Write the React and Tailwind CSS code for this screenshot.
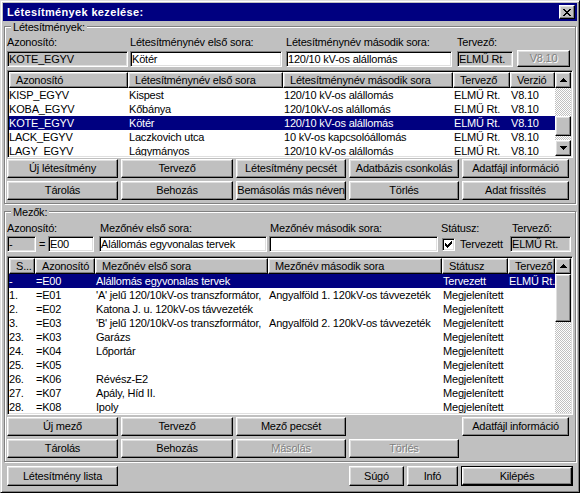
import React from 'react';

// classic 3D edges
const RAISED = "border border-t-white border-l-white border-r-black border-b-black shadow-[inset_-1px_-1px_#808080,inset_1px_1px_#dfdfdf]";
const SUNKEN = "border border-t-[#808080] border-l-[#808080] border-r-white border-b-white shadow-[inset_1px_1px_#000,inset_-1px_-1px_#dfdfdf] p-[1px]";
const ETCHED = "border border-[#808080] shadow-[inset_1px_1px_#fff,1px_1px_#fff]";
const DIS = "text-[#808080] [text-shadow:1px_1px_0_#fff]";
const DITHER = "bg-[repeating-conic-gradient(#c0c0c0_0%_25%,#ffffff_0%_50%)] bg-[length:2px_2px]";

const Pixels = ({ w, h, rects }) => (
  <svg width={w} height={h} viewBox={`0 0 ${w} ${h}`} shapeRendering="crispEdges">
    {rects.map(([x, y, rw], i) => (
      <rect key={i} x={x} y={y} width={rw} height={1} fill="#000" />
    ))}
  </svg>
);

const closeRects = [
  [0, 0, 2], [6, 0, 2], [1, 1, 2], [5, 1, 2], [2, 2, 4], [3, 3, 2],
  [2, 4, 4], [1, 5, 2], [5, 5, 2], [0, 6, 2], [6, 6, 2],
];
const upRects = [[3, 0, 1], [2, 1, 3], [1, 2, 5], [0, 3, 7]];
const downRects = [[0, 0, 7], [1, 1, 5], [2, 2, 3], [3, 3, 1]];
const checkRects = [
  [6, 0, 1], [5, 1, 2], [0, 2, 1], [4, 2, 3], [0, 3, 2], [3, 3, 3], [0, 4, 5], [1, 5, 3], [2, 6, 1],
];

const Button = ({ children, disabled, className = '' }) => (
  <div className={`${RAISED} bg-[#c0c0c0] flex items-center justify-center whitespace-nowrap ${disabled ? DIS : ''} ${className}`}>
    {children}
  </div>
);

const Field = ({ children, gray, className = '' }) => (
  <div className={`${SUNKEN} h-[16px] ${gray ? 'bg-[#c0c0c0]' : 'bg-white'} pl-[1px] leading-[12px] whitespace-nowrap overflow-hidden flex items-center ${className}`}>
    {children}
  </div>
);

const Group = ({ title, className = '', children }) => (
  <div className={`${ETCHED} mx-[1px] pl-[2px] pr-[2px] pb-[3px] flex flex-col ${className}`}>
    <div className="-mt-[6px] ml-[4px] w-fit px-[2px] h-[13px] bg-[#c0c0c0]">{title}</div>
    {children}
  </div>
);

const ScrollBtn = ({ rects }) => (
  <div className={`${RAISED} bg-[#c0c0c0] h-[16px] flex items-center justify-center`}>
    <Pixels w={7} h={4} rects={rects} />
  </div>
);

const ListView = ({ cols, rows, selected, className = '', scroll }) => (
  <div className={`${SUNKEN} flex bg-white ${className}`}>
    <div className="flex-1 flex flex-col overflow-hidden">
      <div className="flex h-[16px] shrink-0 bg-[#c0c0c0]">
        {cols.map((c, i) => (
          <div key={i} className={`${RAISED} shrink-0 pl-[6px] flex items-center whitespace-nowrap overflow-hidden`} style={{ width: c.w }}>
            {c.title}
          </div>
        ))}
      </div>
      <div className="flex-1 overflow-hidden">
        {rows.map((r, i) => (
          <div key={i} className={`flex h-[14px] items-center ${i === selected ? 'bg-[#000080] text-white' : ''}`}>
            {r.map((t, j) => (
              <div key={j} className={`shrink-0 whitespace-nowrap overflow-hidden ${j === 0 ? 'pl-0' : 'pl-[1px]'}`} style={{ width: cols[j].w }}>
                {t}
              </div>
            ))}
          </div>
        ))}
      </div>
    </div>
    <div className="w-[16px] flex flex-col shrink-0">{scroll}</div>
  </div>
);

const facilityCols = [
  { title: 'Azonosító', w: 119 },
  { title: 'Létesítménynév első sora', w: 155 },
  { title: 'Létesítménynév második sora', w: 170 },
  { title: 'Tervező', w: 57 },
  { title: 'Verzió', w: 45 },
];

const facilityRows = [
  ['KISP_EGYV', 'Kispest', '120/10 kV-os alállomás', 'ELMŰ Rt.', 'V8.10'],
  ['KOBA_EGYV', 'Kőbánya', '120/10kV-os alállomás', 'ELMŰ Rt.', 'V8.10'],
  ['KOTE_EGYV', 'Kötér', '120/10 kV-os alállomás', 'ELMŰ Rt.', 'V8.10'],
  ['LACK_EGYV', 'Laczkovich utca', '10 kV-os kapcsolóállomás', 'ELMŰ Rt.', 'V8.10'],
  ['LAGY_EGYV', 'Lágymányos', '120/10 kV-os alállomás', 'ELMŰ Rt.', 'V8.10'],
];

const fieldCols = [
  { title: 'S...', w: 26 },
  { title: 'Azonosító', w: 60 },
  { title: 'Mezőnév első sora', w: 173 },
  { title: 'Mezőnév második sora', w: 174 },
  { title: 'Státusz', w: 66 },
  { title: 'Tervező', w: 47 },
];

const fieldRows = [
  ['-', '=E00', 'Alállomás egyvonalas tervek', '', 'Tervezett', 'ELMŰ Rt.'],
  ['1.', '=E01', "'A' jelű 120/10kV-os transzformátor,", 'Angyalföld 1. 120kV-os távvezeték', 'Megjelenített', ''],
  ['2.', '=E02', 'Katona J. u. 120kV-os távvezeték', '', 'Megjelenített', ''],
  ['3.', '=E03', "'B' jelű 120/10kV-os transzformátor,", 'Angyalföld 2. 120kV-os távvezeték', 'Megjelenített', ''],
  ['23.', '=K03', 'Garázs', '', 'Megjelenített', ''],
  ['24.', '=K04', 'Lőportár', '', 'Megjelenített', ''],
  ['25.', '=K05', '', '', 'Megjelenített', ''],
  ['26.', '=K06', 'Révész-E2', '', 'Megjelenített', ''],
  ['27.', '=K07', 'Apály, Híd II.', '', 'Megjelenített', ''],
  ['28.', '=K08', 'Ipoly', '', 'Megjelenített', ''],
];

export default function App() {
  return (
    <div className="w-[580px] h-[493px] bg-[#c0c0c0] border border-t-[#dfdfdf] border-l-[#dfdfdf] border-r-black border-b-black shadow-[inset_1px_1px_#fff,inset_-1px_-1px_#808080] p-[2px] flex flex-col font-['Liberation_Sans',Arial,sans-serif] text-[11px] leading-[13px] tracking-[-0.2px] text-black select-none">
      {/* title bar */}
      <div className="h-[18px] shrink-0 bg-[#000080] flex items-center pl-[4px] pr-[2px]">
        <span className="text-white font-bold tracking-[0.35px]">Létesítmények kezelése:</span>
        <div className={`${RAISED} bg-[#c0c0c0] ml-auto w-[16px] h-[14px] flex items-center justify-center`}>
          <Pixels w={8} h={7} rects={closeRects} />
        </div>
      </div>

      {/* facilities */}
      <Group title="Létesítmények:" className="mt-[5px]">
        <div className="flex mt-[2px]">
          <div className="w-[121px] flex flex-col">
            <div className="h-[13px]">Azonosító:</div>
            <Field gray className="mt-[2px]">KOTE_EGYV</Field>
          </div>
          <div className="w-[152px] ml-[2px] flex flex-col">
            <div className="h-[13px]">Létesítménynév első sora:</div>
            <Field className="mt-[2px]">Kötér</Field>
          </div>
          <div className="w-[166px] ml-[4px] flex flex-col">
            <div className="h-[13px]">Létesítménynév második sora:</div>
            <Field className="mt-[2px]">120/10 kV-os alállomás</Field>
          </div>
          <div className="w-[56px] ml-[5px] flex flex-col">
            <div className="h-[13px]">Tervező:</div>
            <Field gray className="mt-[2px]">ELMŰ Rt.</Field>
          </div>
          <div className="w-[53px] ml-[4px] flex flex-col">
            <div className="h-[13px]" />
            <Button disabled className="mt-[1px] h-[17px]">V8.10</Button>
          </div>
        </div>

        <ListView
          className="mt-[3px] h-[88px]"
          cols={facilityCols}
          rows={facilityRows}
          selected={2}
          scroll={
            <>
              <ScrollBtn rects={upRects} />
              <div className={`${DITHER} h-[28px]`} />
              <div className={`${RAISED} bg-[#c0c0c0] h-[20px]`} />
              <div className={`${DITHER} flex-1`} />
              <ScrollBtn rects={downRects} />
            </>
          }
        />

        <div className="mt-[1px] grid grid-cols-[111px_112px_110px_110px_107px] gap-x-[3px] gap-y-[3px] auto-rows-[19px]">
          <Button>Új létesítmény</Button>
          <Button>Tervező</Button>
          <Button>Létesítmény pecsét</Button>
          <Button>Adatbázis csonkolás</Button>
          <Button>Adatfájl információ</Button>
          <Button>Tárolás</Button>
          <Button>Behozás</Button>
          <Button>Bemásolás más néven</Button>
          <Button>Törlés</Button>
          <Button>Adat frissítés</Button>
        </div>
      </Group>

      {/* fields */}
      <Group title="Mezők:" className="mt-[7px]">
        <div className="flex mt-[3px]">
          <div className="w-[87px] flex flex-col">
            <div className="h-[13px]">Azonosító:</div>
            <div className="flex items-center mt-[1px]">
              <Field gray className="w-[29px]">-</Field>
              <div className="w-[12px] text-center">=</div>
              <Field className="w-[46px]">E00</Field>
            </div>
          </div>
          <div className="w-[168px] ml-[5px] flex flex-col">
            <div className="h-[13px] pl-[1px]">Mezőnév első sora:</div>
            <Field className="mt-[1px]">Alállomás egyvonalas tervek</Field>
          </div>
          <div className="w-[169px] ml-[2px] flex flex-col">
            <div className="h-[13px] pl-[1px]">Mezőnév második sora:</div>
            <Field className="mt-[1px]" />
          </div>
          <div className="w-[66px] ml-[3px] flex flex-col">
            <div className="h-[13px]">Státusz:</div>
            <div className="h-[16px] mt-[1px] flex items-center">
              <div className={`${SUNKEN} ml-[1px] w-[13px] h-[13px] bg-white flex items-center justify-center`}>
                <Pixels w={7} h={7} rects={checkRects} />
              </div>
              <span className="ml-[5px] whitespace-nowrap">Tervezett</span>
            </div>
          </div>
          <div className="w-[61px] ml-[3px] flex flex-col">
            <div className="h-[13px] pl-[2px]">Tervező:</div>
            <Field gray className="mt-[1px]">ELMŰ Rt.</Field>
          </div>
        </div>

        <ListView
          className="mt-[4px] h-[159px]"
          cols={fieldCols}
          rows={fieldRows}
          selected={0}
          scroll={
            <>
              <ScrollBtn rects={upRects} />
              <div className={`${RAISED} bg-[#c0c0c0] h-[48px]`} />
              <div className={`${DITHER} flex-1`} />
            </>
          }
        />

        <div className="mt-[2px] grid grid-cols-[111px_112px_110px_110px_107px] gap-x-[3px] gap-y-[3px] auto-rows-[19px]">
          <Button>Új mező</Button>
          <Button>Tervező</Button>
          <Button>Mező pecsét</Button>
          <div />
          <Button>Adatfájl információ</Button>
          <Button>Tárolás</Button>
          <Button>Behozás</Button>
          <Button disabled>Másolás</Button>
          <Button disabled>Törlés</Button>
          <div />
        </div>
      </Group>

      {/* bottom buttons */}
      <div className="mt-[4px] pl-[4px] flex h-[20px]">
        <Button className="w-[111px]">Létesítmény lista</Button>
        <Button className="w-[55px] ml-[231px]">Súgó</Button>
        <Button className="w-[51px] ml-[3px]">Infó</Button>
        <div className="w-[112px] ml-[3px] border border-black flex">
          <Button className="flex-1">Kilépés</Button>
        </div>
      </div>
    </div>
  );
}
